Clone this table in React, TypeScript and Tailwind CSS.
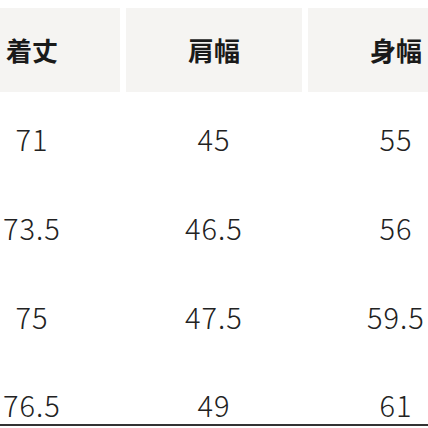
const headers = ["着丈", "肩幅", "身幅"];

const rows = [
  ["71", "45", "55"],
  ["73.5", "46.5", "56"],
  ["75", "47.5", "59.5"],
  ["76.5", "49", "61"],
];

export default function App() {
  return (
    <div className="w-[428px] h-[428px] overflow-hidden bg-white text-[#222] font-['Noto_Sans_CJK_JP','Noto_Sans',sans-serif]">
      <div className="ml-[-56px] w-[540px] pt-[8px]">
        {/* Header */}
        <div className="grid grid-cols-[176px_176px_176px] gap-x-[6px]">
          {headers.map((h) => (
            <div key={h} className="h-[84px] bg-[#f5f4f2] flex items-center justify-center">
              <span className="text-[26px] leading-[30px] font-bold text-[#1a1a1a]">{h}</span>
            </div>
          ))}
        </div>

        {/* Body */}
        <div className="pt-[1px] border-b-2 border-[#333]">
          {rows.map((r, i) => (
            <div
              key={i}
              className={
                i === rows.length - 1
                  ? "grid grid-cols-[176px_176px_176px] gap-x-[6px] h-[64px] items-end pb-[5px]"
                  : "grid grid-cols-[176px_176px_176px] gap-x-[6px] h-[89px] items-center"
              }
            >
              {r.map((v, j) => (
                <div key={j} className="text-center text-[29px] leading-[30px] font-light tracking-[1px]">
                  {v}
                </div>
              ))}
            </div>
          ))}
        </div>
      </div>
    </div>
  );
}
